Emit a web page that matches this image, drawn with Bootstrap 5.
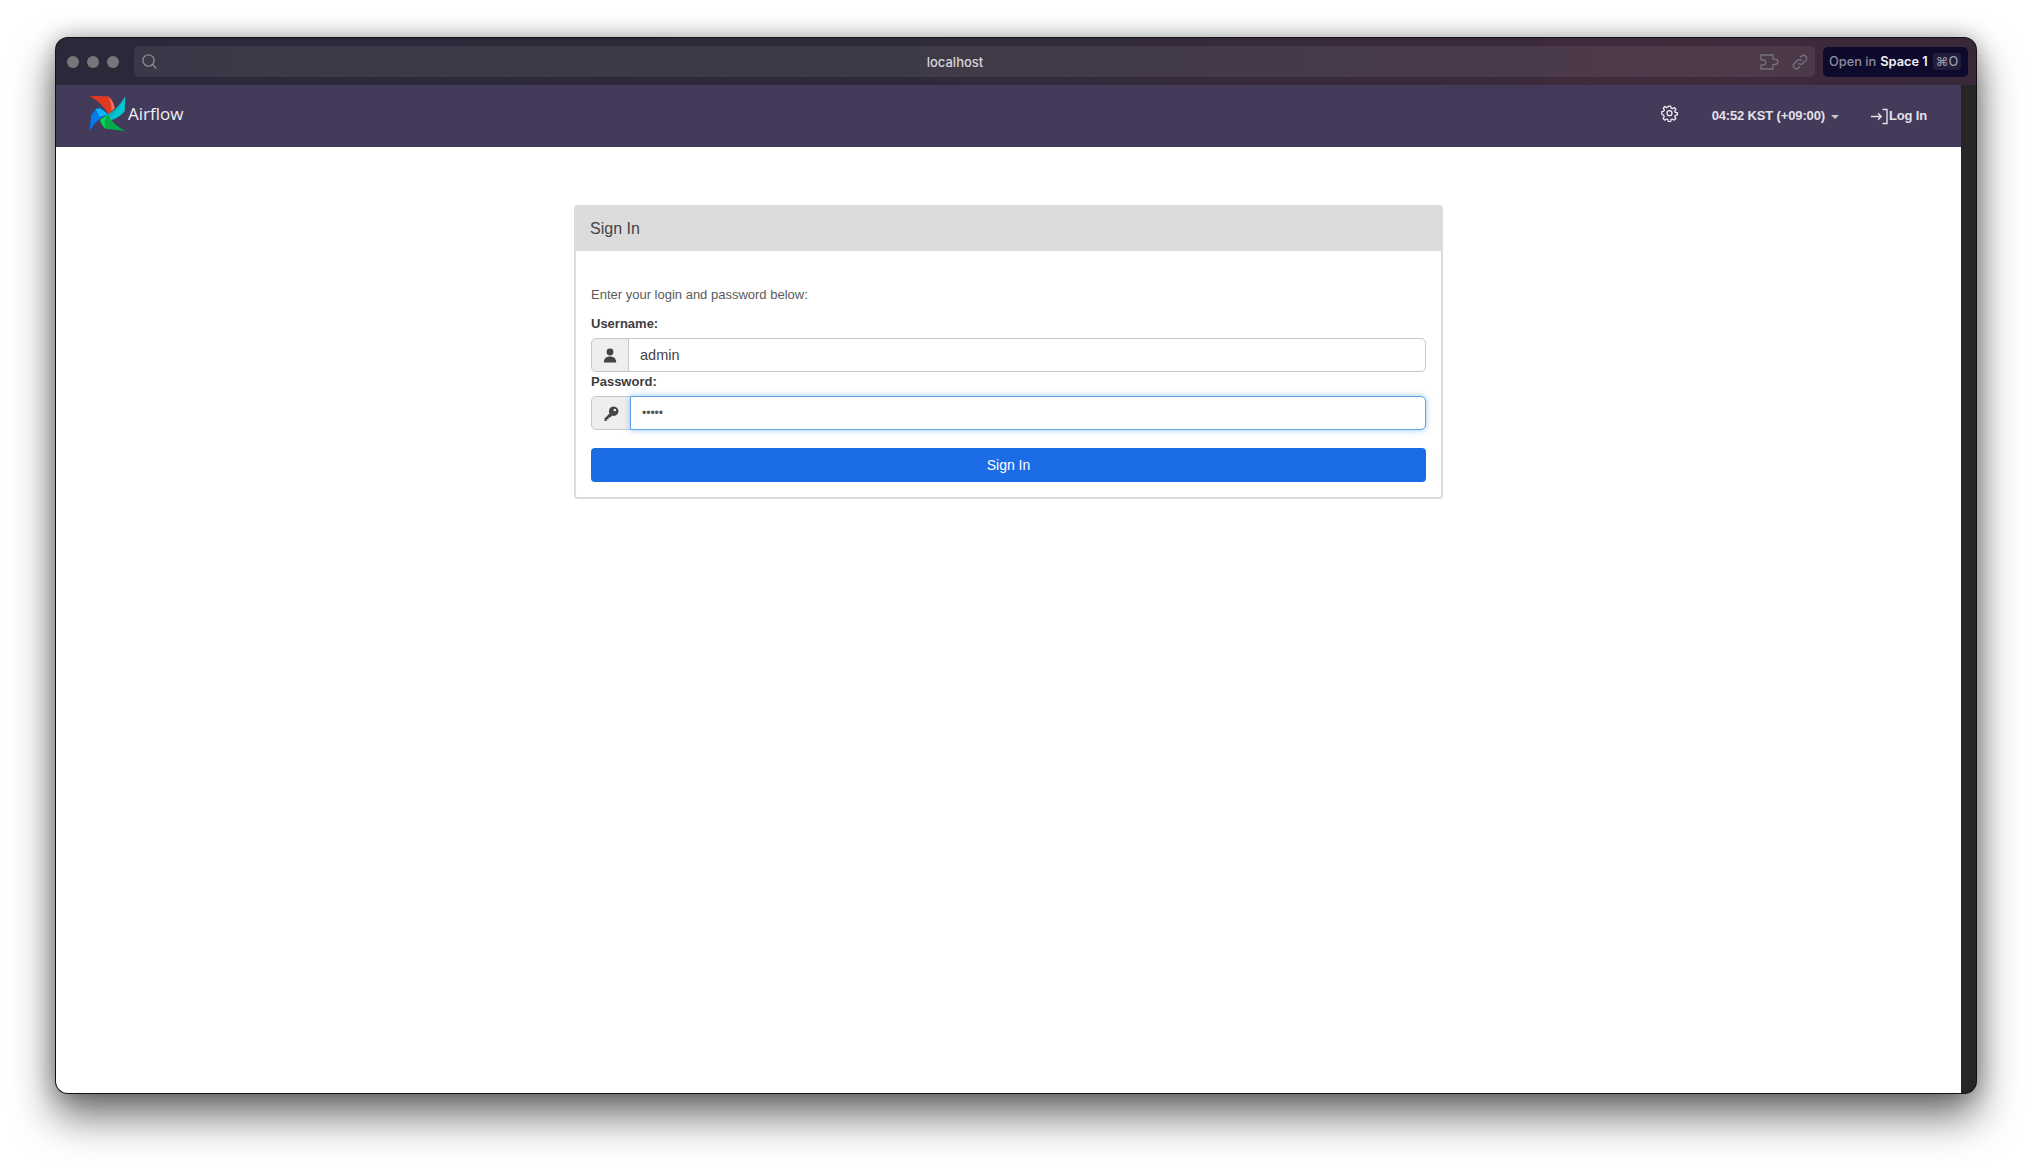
<!doctype html>
<html lang="en">
<head>
<meta charset="utf-8">
<title>Airflow</title>
<link href="https://cdn.jsdelivr.net/npm/bootstrap@5.3.0/dist/css/bootstrap.min.css" rel="stylesheet">
<style>
html,body{height:100%;overflow:hidden;background:#fff}
body{font-family:"Liberation Sans",Arial,sans-serif;color:#51504f}
.stage{padding:38px 56px 73px 56px;height:1167px}
.winframe{height:1055px;border-radius:12px;overflow:hidden;background:#262626;box-shadow:0 0 0 1px #111,0 22px 42px 2px rgba(0,0,0,.55),0 0 22px rgba(0,0,0,.3);display:flex;flex-direction:column}
.chrome{height:47px;flex:none;background:linear-gradient(90deg,#2a2839 0%,#2f2a3a 45%,#3f2a3c 85%,#38283a 100%);padding:8px 8px 8px 11px;gap:8px}
.dot{width:12px;height:12px;border-radius:50%;background:#77767b;margin-right:8px}
.dots{margin-right:-1px}
.urlbar{height:31px;background:rgba(255,255,255,.08);border-radius:5px;flex:1;position:relative;padding:0 7px;color:#d8d6da;font:500 13px Inter,sans-serif}
.urlhost{position:absolute;left:0;right:39px;text-align:center;top:8px;line-height:17px}
.openin{width:145px;height:30px;flex:none;border-radius:5px;background:#0e0a2b;color:#8f8da0;font:500 12.8px Inter,sans-serif;padding:0 6px;white-space:nowrap}
.openin b{color:#f2f1f5;font-weight:600;margin-left:4px}
.kbd-chip{background:#211e3b;border-radius:3px;padding:1px 3px;margin-left:5px;font-size:12.8px;color:#9a98aa}
.contentrow{flex:1;min-height:0}
.pagearea{width:1905px;background:#fff;flex:none;display:flex;flex-direction:column}
.topnav{height:62px;background:#443b5a;padding:0 34px 0 33px;flex:none}
.brandlogo{margin-top:-5px;flex:none}
.brandname{font:400 17px "Open Sans",sans-serif;color:#f2f0f5;margin-left:2px;margin-top:-6px}
.navtext{color:#e3e1e8;font-size:13px;font-weight:700;letter-spacing:-.15px;white-space:nowrap}
.gearicon{margin-right:34px;margin-top:-5px;display:block}
.caretmark{display:inline-block;border-top:4px solid #c9c6d1;border-left:4px solid transparent;border-right:4px solid transparent;margin-left:6px;vertical-align:1px}
.tzitem{margin-right:31px}
.signcard{width:869px;margin:58px auto 0 518px;border:2px solid #dcdcdc;border-radius:4px;--bs-card-bg:#fff;height:294px}
.signhead{height:45px;background:#dcdcdc;margin:-1px -2px 0 -2px;padding:0 16px;font-size:16px;color:#444;border-radius:4px 4px 0 0;line-height:45px}
.signbody{padding:35px 15px 0 15px;font-size:13px}
.intro{color:#5a5a5a;line-height:17px;margin-bottom:12px}
.fieldlabel{font-weight:700;color:#3d3d3d;font-size:13px;line-height:17px;margin:0 0 6px 0;display:block}
.fieldlabel.second{margin-top:1px;margin-bottom:6px}
.signbody .input-group{height:34px}
.addon{width:38px;justify-content:center;background:#eee;border-color:#c6c6c6;padding:0;border-radius:5px 0 0 5px}
.addon.widened{width:40px}
.signbody .form-control{font-size:14.500px;color:#444;padding:0 11px;border-color:#c6c6c6;height:34px;box-shadow:none;border-radius:0 5px 5px 0}
.signbody .form-control.focused{border-color:#5ba4e8;box-shadow:0 0 6px rgba(91,164,232,.6);position:relative;z-index:3;font-size:12px;color:#555}
.submitbtn{width:100%;height:34px;margin-top:18px;background:#1c6ce6;border:0;border-radius:4px;font-size:14px;color:#fff;padding:0}
</style>
</head>
<body>
<div class="stage">
  <div class="winframe">
    <div class="chrome d-flex align-items-center">
      <div class="dots d-flex align-items-center">
        <span class="dot"></span><span class="dot"></span><span class="dot"></span>
      </div>
      <div class="urlbar d-flex align-items-center">
        <svg width="17" height="17" viewBox="0 0 17 17" fill="none" stroke="#8a8894" stroke-width="1.4"><circle cx="7.5" cy="7.5" r="5.6"/><path d="M11.6 11.6 15 15" stroke-linecap="round"/></svg>
        <span class="urlhost">localhost</span>
        <span class="ms-auto d-flex align-items-center urlicons">
          <svg class="me-2" width="20" height="18" viewBox="0 0 20 18" fill="none" stroke="#77717f" stroke-width="1.3" stroke-linejoin="round"><path d="M1 2h12v4.2h2.2a2.6 2.6 0 0 1 0 5.2H13V16H1v-4.2h2.5a2.4 2.4 0 0 0 0-4.8H1z"/></svg>
          <svg class="ms-1" width="16" height="16" viewBox="0 0 16 16" fill="none" stroke="#77717f" stroke-width="1.3" stroke-linecap="round"><path d="M6.5 9.5a3 3 0 0 0 4.3 0l3-3a3 3 0 0 0-4.3-4.2l-1 1"/><path d="M9.5 6.5a3 3 0 0 0-4.3 0l-3 3a3 3 0 0 0 4.3 4.2l1-1"/></svg>
        </span>
      </div>
      <div class="openin d-flex align-items-center">Open in <b>Space 1</b><span class="kbd-chip">⌘O</span></div>
    </div>
    <div class="contentrow d-flex">
      <div class="pagearea">
        <nav class="topnav d-flex align-items-center">
          <svg class="brandlogo" width="37" height="37" viewBox="148 224 112 110">
            <path d="M150 226 205 227Q222 240 226 262L207 282Q190 248 150 226Z" fill="#e43921"/>
            <path d="M205 227Q222 240 226 262L216 272Q217 245 205 227Z" fill="#f4725a"/>
            <path d="M258 226 256 272Q240 292 212 300L205 282Q240 262 258 226Z" fill="#00c7d4"/>
            <path d="M258 226Q240 262 205 282L214 292Q235 262 258 226Z" fill="#11a8bd"/>
            <path d="M258 332 198 325Q184 312 182 298L205 282Q222 315 258 332Z" fill="#00ad46"/>
            <path d="M198 325Q184 312 182 298L205 282Q190 300 198 325Z" fill="#04d659"/>
            <path d="M150 332 155 285Q163 268 180 260L205 282Q170 295 150 332Z" fill="#017cee"/>
            <path d="M168 266Q186 260 205 282L180 289Q175 275 168 266Z" fill="#0cb6ff"/>
          </svg>
          <span class="brandname">Airflow</span>
          <span class="ms-auto d-flex align-items-center">
            <svg class="gearicon" width="17" height="17" viewBox="0 0 24 24" fill="none" stroke="#efedf2" stroke-width="1.8" stroke-linejoin="round"><path d="M10.3 2h3.4l.5 2.8 2 .9 2.4-1.6 2.4 2.4-1.6 2.4.9 2 2.8.5v3.2l-2.8.5-.9 2 1.6 2.4-2.4 2.4-2.4-1.6-2 .9-.5 2.8h-3.4l-.5-2.8-2-.9-2.4 1.6-2.4-2.4 1.6-2.4-.9-2L1 13.1V9.9l2.8-.5.9-2L3.100 5l2.400-2.400 2.400 1.600 2-.9z" transform="translate(0 -.5)"/><circle cx="12" cy="11.500" r="3.500"/></svg>
            <span class="navtext tzitem">04:52 KST (+09:00)<i class="caretmark"></i></span>
            <span class="navtext d-flex align-items-center">
              <svg width="19" height="17" viewBox="0 0 19 17" fill="none" stroke="#e3e1e8" stroke-width="1.4"><path d="M1 8.500h10M8 5.200l3.300 3.300L8 11.800"/><path d="M12.500 1.500h4.500v14h-4.500"/></svg>Log In
            </span>
          </span>
        </nav>
        <div class="flex-grow-1">
          <div class="card signcard">
            <div class="signhead">Sign In</div>
            <div class="signbody">
              <div class="intro">Enter your login and password below:</div>
              <form>
                <label class="fieldlabel" for="u">Username:</label>
                <div class="input-group">
                  <span class="input-group-text addon"><svg width="14" height="15" viewBox="0 0 14 15" fill="#444"><circle cx="7" cy="4" r="3.400"/><path d="M.8 14.500c0-4 2.400-6 6.200-6s6.200 2 6.200 6z"/></svg></span>
                  <input id="u" class="form-control" type="text" value="admin">
                </div>
                <label class="fieldlabel second" for="p">Password:</label>
                <div class="input-group">
                  <span class="input-group-text addon widened"><svg width="15" height="15" viewBox="0 0 15 15" fill="#444"><path fill-rule="evenodd" d="M9.800.5a4.700 4.700 0 1 1-1.700 9.100L6.300 11.400H4.500v1.800H2.700V15H.5v-2.600l5-5A4.700 4.700 0 0 1 9.800.5zm1 2.200a1.300 1.300 0 1 0 0 2.600 1.300 1.300 0 0 0 0-2.600z"/></svg></span>
                  <input id="p" class="form-control focused" type="password" value="admin">
                </div>
                <button type="button" class="btn btn-primary submitbtn">Sign In</button>
              </form>
            </div>
          </div>
        </div>
      </div>
    </div>
  </div>
</div>
<script src="https://cdn.jsdelivr.net/npm/bootstrap@5.3.0/dist/js/bootstrap.bundle.min.js"></script>
</body>
</html>
